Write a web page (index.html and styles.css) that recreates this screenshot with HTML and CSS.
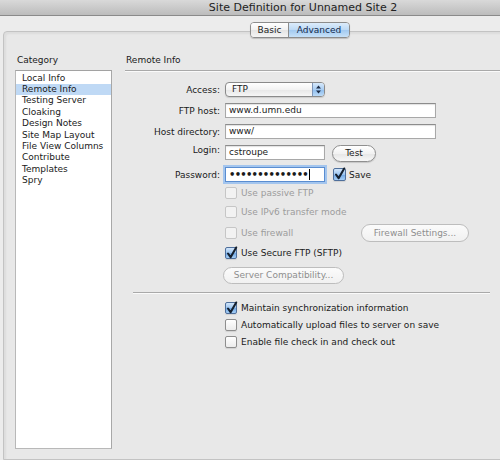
FILE: index.html
```html
<!DOCTYPE html>
<html>
<head>
<meta charset="utf-8">
<link rel="stylesheet" href="styles.css">
</head>
<body>
<div class="titlebar">Site Definition for Unnamed Site 2</div>
<div class="tabs"><span class="seg seg-basic">Basic</span><span class="seg seg-adv">Advanced</span></div>
<div class="panel">
  <div class="cat">
    <div class="cat-label">Category</div>
    <ul class="list">
      <li>Local Info</li>
      <li class="sel">Remote Info</li>
      <li>Testing Server</li>
      <li>Cloaking</li>
      <li>Design Notes</li>
      <li>Site Map Layout</li>
      <li>File View Columns</li>
      <li>Contribute</li>
      <li>Templates</li>
      <li>Spry</li>
    </ul>
  </div>
  <div class="content">
    <div class="heading">Remote Info</div>
    <div class="row r-access">
      <label class="lbl">Access:</label>
      <div class="select"><span class="select-val">FTP</span><span class="arrows"><svg width="9" height="13" viewBox="0 0 9 13"><path d="M4.5 2.5 L7 5.5 L2 5.5 Z" fill="#1d2b44"/><path d="M4.5 10.5 L7 7.5 L2 7.5 Z" fill="#1d2b44"/></svg></span></div>
    </div>
    <div class="row r-field">
      <label class="lbl">FTP host:</label>
      <div class="input wide">www.d.umn.edu</div>
    </div>
    <div class="row r-field">
      <label class="lbl">Host directory:</label>
      <div class="input wide">www/</div>
    </div>
    <div class="row r-field r-login">
      <label class="lbl">Login:</label>
      <div class="input short">cstroupe</div>
      <span class="btn btn-test">Test</span>
    </div>
    <div class="row r-field">
      <label class="lbl">Password:</label>
      <div class="input short focus"><span class="dots">••••••••••••••</span><span class="caret"></span></div>
      <span class="cb checked cb-save"><svg width="13" height="13" viewBox="0 0 13 13"><path d="M3 6.5 L5.6 10.2 L11.2 0.5" fill="none" stroke="#15202e" stroke-width="2.1" stroke-linecap="round" stroke-linejoin="round"/></svg></span>
      <span class="cb-text">Save</span>
    </div>
    <div class="cbrow h-passive"><span class="cb disabled"></span><span class="cb-text dim">Use passive FTP</span></div>
    <div class="cbrow h-ipv6"><span class="cb disabled"></span><span class="cb-text dim">Use IPv6 transfer mode</span></div>
    <div class="cbrow h-fw"><span class="cb disabled"></span><span class="cb-text dim fw-text">Use firewall</span><span class="btn btn-dis btn-fw">Firewall Settings...</span></div>
    <div class="cbrow h-sftp"><span class="cb checked"><svg width="13" height="13" viewBox="0 0 13 13"><path d="M3 6.5 L5.6 10.2 L11.2 0.5" fill="none" stroke="#15202e" stroke-width="2.1" stroke-linecap="round" stroke-linejoin="round"/></svg></span><span class="cb-text">Use Secure FTP (SFTP)</span></div>
    <div class="btn btn-dis btn-compat">Server Compatibility...</div>
    <div class="separator"></div>
    <div class="cbrow h-opt first"><span class="cb checked"><svg width="13" height="13" viewBox="0 0 13 13"><path d="M3 6.5 L5.6 10.2 L11.2 0.5" fill="none" stroke="#15202e" stroke-width="2.1" stroke-linecap="round" stroke-linejoin="round"/></svg></span><span class="cb-text">Maintain synchronization information</span></div>
    <div class="cbrow h-opt"><span class="cb"></span><span class="cb-text">Automatically upload files to server on save</span></div>
    <div class="cbrow h-opt"><span class="cb"></span><span class="cb-text">Enable file check in and check out</span></div>
  </div>
</div>
</body>
</html>
```
FILE: styles.css
```css
html, body {
  margin: 0;
  padding: 0;
}
body {
  width: 500px;
  height: 460px;
  overflow: hidden;
  background: #ececec;
  font-family: "DejaVu Sans", "Noto Sans", sans-serif;
  font-size: 9px;
  color: #1a1a1a;
}
.titlebar {
  height: 15px;
  line-height: 15px;
  border-bottom: 1px solid #8a8a8a;
  background: linear-gradient(#d9d9d9, #bcbcbc);
  font-size: 11px;
  color: #222;
  text-align: center;
  padding-left: 106px;
}
.tabs {
  position: relative;
  z-index: 1;
  display: flex;
  width: max-content;
  margin: 6px 0 0 250px;
  height: 14px;
  border: 1px solid #8c8c8c;
  border-radius: 4px;
  overflow: hidden;
  box-shadow: 0 1px 1px rgba(0, 0, 0, 0.18);
}
.seg {
  display: block;
  line-height: 14px;
  text-align: center;
}
.seg-basic {
  width: 37px;
  background: linear-gradient(#ffffff, #f1f1f1 50%, #e4e4e4 51%, #f4f4f4);
  color: #222;
}
.seg-adv {
  width: 60px;
  border-left: 1px solid #8c8c8c;
  background: linear-gradient(#dcecfb, #bcd9f5 50%, #a2c9f0 51%, #c7e1f8);
  color: #142a4c;
}
.panel {
  display: flex;
  margin: -7px 0 0 3px;
  width: 520px;
  height: 405px;
  padding-top: 22px;
  border: 1px solid #c3c3c3;
  border-radius: 4px 0 0 0;
  background: #e8e8e8;
  box-shadow: inset 2px 2px 2px rgba(0, 0, 0, 0.05);
}
.cat {
  margin-left: 11px;
  width: 97px;
  flex: none;
}
.cat-label {
  height: 12px;
  line-height: 12px;
  padding-left: 2px;
  margin-bottom: 4px;
}
.list {
  list-style: none;
  margin: 0;
  padding: 1.5px 0 0;
  box-sizing: border-box;
  height: 379px;
  background: #fff;
  border: 1px solid #b8b8b8;
  border-top-color: #a2a2a2;
  border-right-color: #a8a8a8;
}
.list li {
  line-height: 11.4px;
  padding-left: 6px;
  white-space: nowrap;
}
.list li.sel {
  background: #bfd9f5;
}
.content {
  margin-left: 13px;
  width: 380px;
  flex: none;
}
.heading {
  line-height: 12px;
  padding: 0 0 4px 1px;
  border-bottom: 1px solid #a9a9a9;
  box-shadow: 0 1px 0 #fafafa;
}
.row {
  display: flex;
  align-items: center;
  height: 15px;
}
.r-access {
  margin-top: 11px;
}
.r-field {
  margin-top: 6px;
}
.r-login {
  height: 16px;
  align-items: flex-start;
}
.lbl {
  width: 95px;
  margin-right: 5px;
  text-align: right;
  flex: none;
}
.select {
  display: flex;
  justify-content: space-between;
  width: 100px;
  height: 15px;
  box-sizing: border-box;
  border: 1px solid #8a8a8a;
  border-radius: 4px;
  overflow: hidden;
  background: linear-gradient(#ffffff, #f3f3f3 50%, #e6e6e6 51%, #f6f6f6);
  box-shadow: 0 1px 1px rgba(0, 0, 0, 0.12);
}
.select-val {
  padding-left: 6px;
  line-height: 13px;
}
.arrows {
  display: flex;
  align-items: center;
  justify-content: center;
  width: 11px;
  border-left: 1px solid #7d95b8;
  background: linear-gradient(#d7e9fb, #a9cdf2 50%, #8dbdee 51%, #bcdaf7);
}
.input {
  height: 15px;
  box-sizing: border-box;
  line-height: 13px;
  padding-left: 3px;
  background: #fff;
  border: 1px solid #a8a8a8;
  border-top-color: #8c8c8c;
  box-shadow: inset 0 1px 1px rgba(0, 0, 0, 0.12);
  white-space: nowrap;
}
.wide {
  width: 211px;
}
.short {
  width: 100px;
}
.focus {
  display: flex;
  align-items: center;
  border-color: #5a8dd0;
  box-shadow: 0 0 0 2px #a3c5ee;
}
.dots {
  font-size: 10px;
  font-weight: bold;
  letter-spacing: -0.75px;
  line-height: 13px;
}
.caret {
  display: inline-block;
  width: 1px;
  height: 11px;
  margin-left: 1px;
  background: #000;
}
.btn {
  display: block;
  height: 17px;
  box-sizing: border-box;
  line-height: 15px;
  text-align: center;
  border: 1px solid #8f8f8f;
  border-radius: 9px;
  background: linear-gradient(#ffffff, #f2f2f2 50%, #e6e6e6 51%, #f7f7f7);
  box-shadow: 0 1px 1px rgba(0, 0, 0, 0.15);
  white-space: nowrap;
  flex: none;
}
.btn-test {
  width: 44px;
  margin-left: 7px;
}
.btn-dis {
  color: #8e8e8e;
  border-color: #bdbdbd;
  background: linear-gradient(#fbfbfb, #f1f1f1);
  box-shadow: none;
}
.btn-fw {
  width: 108px;
  height: 18px;
  line-height: 16px;
}
.btn-compat {
  width: 121px;
  margin: 7px 0 0 98px;
}
.cb {
  display: inline-flex;
  width: 12px;
  height: 12px;
  box-sizing: border-box;
  flex: none;
  border: 1px solid #8e8e8e;
  border-radius: 2px;
  background: linear-gradient(#ffffff, #ececec);
  box-shadow: 0 1px 1px rgba(0, 0, 0, 0.1);
}
.cb svg {
  margin: -1px 0 0 -1px;
  overflow: visible;
}
.cb.checked {
  border-color: #4f6f9b;
  background: linear-gradient(#d2e6fb, #9cc5f0 50%, #6fa6e4 51%, #a6cff6);
}
.cb.disabled {
  border-color: #c6c6c6;
  background: #f2f2f2;
  box-shadow: none;
}
.cb-save {
  width: 13px;
  height: 13px;
  margin-left: 8px;
}
.cb-text {
  margin-left: 4px;
  white-space: nowrap;
}
.cb-save + .cb-text {
  margin-left: 3px;
}
.dim {
  color: #9c9c9c;
}
.cbrow {
  display: flex;
  align-items: center;
  padding-left: 100px;
}
.h-passive {
  height: 22px;
}
.h-ipv6 {
  height: 16px;
}
.h-fw {
  height: 26px;
}
.fw-text {
  width: 120px;
}
.h-sftp {
  height: 14px;
}
.separator {
  margin: 8px 0 0 8px;
  width: 357px;
  height: 0;
  border-top: 1px solid #a9a9a9;
  box-shadow: 0 1px 0 #fafafa;
}
.h-opt {
  height: 17px;
}
.h-opt.first {
  margin-top: 6px;
}
```
